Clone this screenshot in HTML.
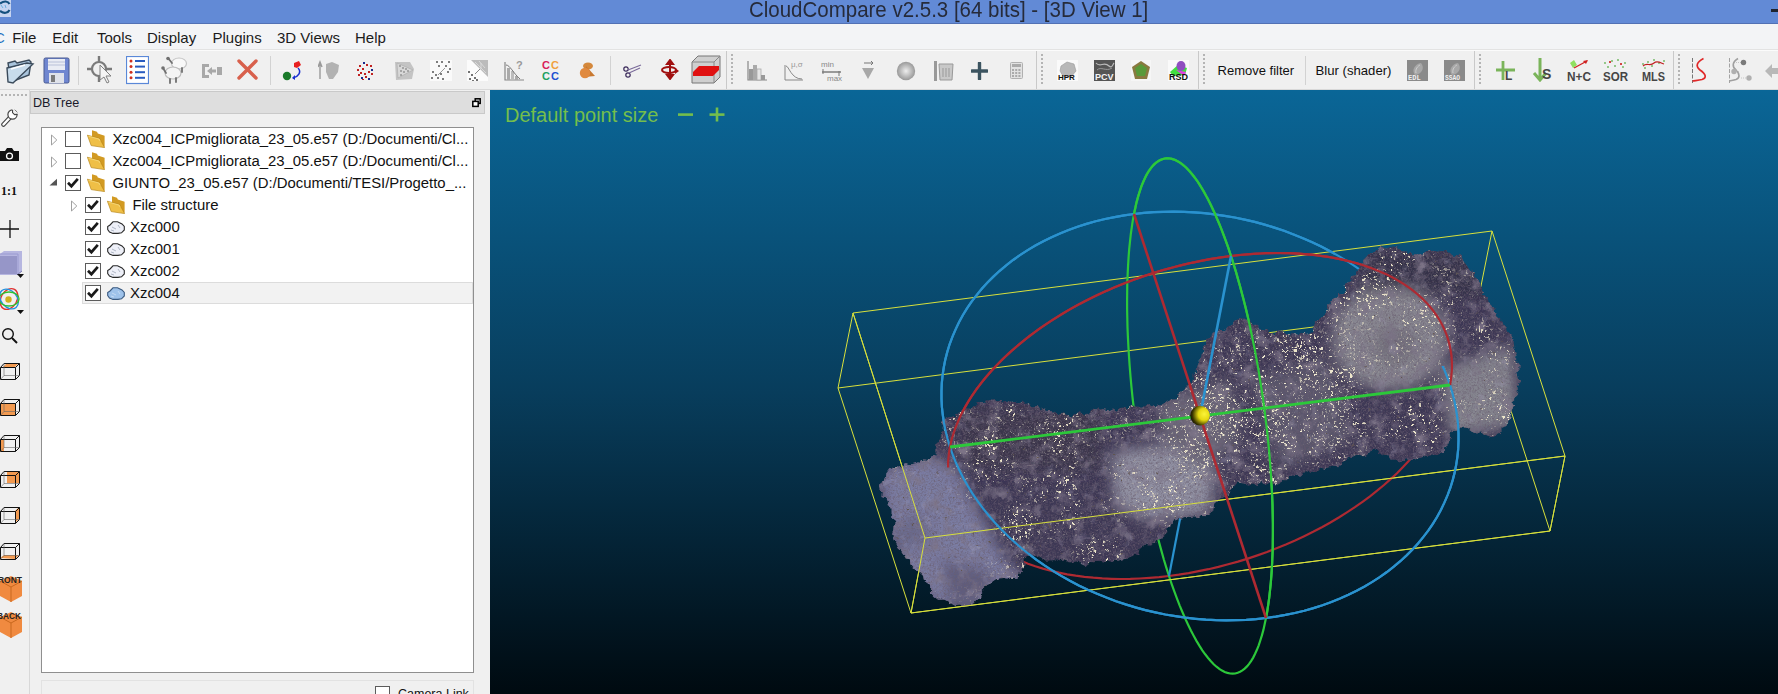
<!DOCTYPE html>
<html><head><meta charset="utf-8">
<style>
*{margin:0;padding:0;box-sizing:border-box}
html,body{width:1778px;height:694px;overflow:hidden;background:#f0f0f0;font-family:"Liberation Sans",sans-serif;color:#000}
.abs{position:absolute}
#title{left:0;top:0;width:1778px;height:24px;background:#628ad6;border-bottom:1.5px solid #5271b4}
#title .t{left:748.5px;top:-3px;font-size:22px;color:#262b3a;white-space:nowrap;transform:scaleX(0.931);transform-origin:0 0}
#menu{left:0;top:24px;width:1778px;height:26px;background:#f3f4f6;border-bottom:1px solid #e3e3e3}
#menu span{position:absolute;top:4.5px;font-size:15px;color:#1b1b1b;white-space:nowrap}
#tb{left:0;top:50px;width:1778px;height:40px;background:#f0f0f0}
#ltb{left:0;top:90px;width:30px;height:604px;background:#f0f0f0;border-right:1px solid #d8d8d8}
#dock{left:30px;top:90px;width:460px;height:604px;background:#f0f0f0}
#dbh{left:30px;top:91px;width:455px;height:23px;background:#dedede;border:1px solid #c9c9c9}
#dbh .t{left:2px;top:4px;font-size:12.6px;color:#1a1a2a}
#tree{left:41px;top:127px;width:433px;height:546px;background:#fff;border:1px solid #8f8f8f}
.row{position:absolute;height:22px;font-size:14.9px;color:#111;white-space:nowrap}
#view{left:490px;top:90px;width:1288px;height:604px;background:linear-gradient(to bottom,#0a6697 0%,#083d5c 50%,#000a10 100%)}
</style></head><body>
<div id="title" class="abs"><div class="t abs">CloudCompare v2.5.3 [64 bits] - [3D View 1]</div>
<svg class="abs" style="left:0;top:0" width="12" height="18"><rect width="11" height="17" fill="#c6d4f0"/><path d="M0,3.5 C4,0.5 8,1 9.5,4" stroke="#14507e" stroke-width="2.2" fill="none"/><path d="M0,11 C4,14 8,13 9.5,10" stroke="#14507e" stroke-width="2.2" fill="none"/><path d="M1,5 L3,8 M5,5 L6,8" stroke="#6ab0e0" stroke-width="1"/></svg>
<div class="abs" style="left:1771px;top:9px;width:8px;height:3px;background:#1e2430"></div></div>

<div id="menu" class="abs">
<span style="left:-6px;color:#1a6fc0">C</span>
<span style="left:12.2px">File</span>
<span style="left:52.3px">Edit</span>
<span style="left:97px">Tools</span>
<span style="left:147px">Display</span>
<span style="left:212.5px">Plugins</span>
<span style="left:277px">3D Views</span>
<span style="left:355px">Help</span>
</div>
<div id="tb" class="abs"></div>
<div id="ltb" class="abs"></div>
<div class="abs" style="left:0;top:50px;width:1778px;height:1px;background:#fbfbfb"></div>
<div class="abs" style="left:0;top:89px;width:1778px;height:1px;background:#d9d9d9"></div>
<div class="abs" style="left:726px;top:51px;width:1px;height:38px;background:#c9c9c9"></div>
<div class="abs" style="left:731px;top:54px;width:2px;height:31px;background:repeating-linear-gradient(to bottom,#b4b4b4 0,#b4b4b4 2px,transparent 2px,transparent 4px)"></div>
<div class="abs" style="left:1036px;top:51px;width:1px;height:38px;background:#c9c9c9"></div>
<div class="abs" style="left:1041px;top:54px;width:2px;height:31px;background:repeating-linear-gradient(to bottom,#b4b4b4 0,#b4b4b4 2px,transparent 2px,transparent 4px)"></div>
<div class="abs" style="left:1198px;top:51px;width:1px;height:38px;background:#c9c9c9"></div>
<div class="abs" style="left:1203px;top:54px;width:2px;height:31px;background:repeating-linear-gradient(to bottom,#b4b4b4 0,#b4b4b4 2px,transparent 2px,transparent 4px)"></div>
<div class="abs" style="left:1474px;top:51px;width:1px;height:38px;background:#c9c9c9"></div>
<div class="abs" style="left:1479px;top:54px;width:2px;height:31px;background:repeating-linear-gradient(to bottom,#b4b4b4 0,#b4b4b4 2px,transparent 2px,transparent 4px)"></div>
<div class="abs" style="left:1673px;top:51px;width:1px;height:38px;background:#c9c9c9"></div>
<div class="abs" style="left:1678px;top:54px;width:2px;height:31px;background:repeating-linear-gradient(to bottom,#b4b4b4 0,#b4b4b4 2px,transparent 2px,transparent 4px)"></div>
<div class="abs" style="left:78px;top:56px;width:1px;height:29px;background:#d2d2d2"></div>
<div class="abs" style="left:270px;top:56px;width:1px;height:29px;background:#d2d2d2"></div>
<div class="abs" style="left:610px;top:56px;width:1px;height:29px;background:#d2d2d2"></div>
<div class="abs" style="left:1305px;top:56px;width:1px;height:29px;background:#d2d2d2"></div>
<svg class="abs" style="left:5px;top:55px" width="30" height="30" viewBox="0 0 30 30" ><path d="M3,8 L10,6 L12,8 L24,5 L26,7 L24,20 L6,27 Z" fill="#a9c4dc" stroke="#3a4a5a" stroke-width="1.4"/><path d="M2,13 L22,8 L28,9 L8,28 L3,27 Z" fill="#c8dcec" stroke="#3a4a5a" stroke-width="1.4"/><path d="M6,14 L20,10" stroke="#fff" stroke-width="1.5"/></svg>
<svg class="abs" style="left:43px;top:57px" width="27" height="27" viewBox="0 0 27 27" ><rect x="1" y="1" width="25" height="25" rx="1.5" fill="#6f86d0" stroke="#4a5a90" stroke-width="1"/><rect x="5" y="2" width="17" height="11" fill="#e9ecf4"/><path d="M5,5 H22 M5,8 H22" stroke="#b8c0d8" stroke-width="1"/><rect x="6" y="16" width="15" height="10" fill="#dfe2ea"/><rect x="8" y="18" width="4" height="7" fill="#7a7a7a"/></svg>
<svg class="abs" style="left:86px;top:55px" width="29" height="29" viewBox="0 0 29 29" ><circle cx="13" cy="14" r="7" fill="none" stroke="#7a7a7a" stroke-width="2.2"/><path d="M13,1 V7 M13,21 V27 M1,14 H6 M20,14 H26" stroke="#7a7a7a" stroke-width="2.4"/><path d="M14,10 L25,21 L20,21 L23,27 L21,28 L18,22 L14,25 Z" fill="#f4f4f4" stroke="#808080" stroke-width="1"/></svg>
<svg class="abs" style="left:126px;top:56px" width="23" height="29" viewBox="0 0 23 29" ><rect x="0.5" y="0.5" width="22" height="27" fill="#fff" stroke="#5a88d8" stroke-width="1.2"/><circle cx="5" cy="5.0" r="1.5" fill="#d03020"/><path d="M9,5.0 H19" stroke="#2a5cc0" stroke-width="2"/><circle cx="5" cy="10.6" r="1.5" fill="#d03020"/><path d="M9,10.6 H19" stroke="#2a5cc0" stroke-width="2"/><circle cx="5" cy="16.2" r="1.5" fill="#d03020"/><path d="M9,16.2 H19" stroke="#2a5cc0" stroke-width="2"/><circle cx="5" cy="21.8" r="1.5" fill="#d03020"/><path d="M9,21.8 H19" stroke="#2a5cc0" stroke-width="2"/></svg>
<svg class="abs" style="left:161px;top:56px" width="27" height="28" viewBox="0 0 27 28" ><ellipse cx="18" cy="7.5" rx="7.5" ry="5.5" fill="#f8f8f8" stroke="#c4c4c4" stroke-width="1.2"/><ellipse cx="12" cy="17" rx="8" ry="6" fill="#f4f4f4" stroke="#bcbcbc" stroke-width="1.2"/><path d="M7,2 L11,7 M2,12 L5,17 M9,23 V27 M15,22 V26 M21,12 V16" stroke="#707070" stroke-width="1.8" stroke-linecap="round"/><circle cx="7" cy="2.5" r="1.8" fill="#707070"/><circle cx="2" cy="12" r="1.8" fill="#707070"/></svg>
<svg class="abs" style="left:201px;top:62px" width="22" height="18" viewBox="0 0 22 18" ><path d="M1,2 H8 V5 H4 V13 H8 V16 H1 Z" fill="#a8a8a8"/><path d="M6,9 L11,5 V7.5 H15 V10.5 H11 V13 Z" fill="#a8a8a8"/><rect x="16" y="5" width="5" height="8" fill="#a8a8a8"/></svg>
<svg class="abs" style="left:236px;top:58px" width="23" height="23" viewBox="0 0 23 23" ><path d="M3,3 L20,20 M20,3 L3,20" stroke="#d8604c" stroke-width="3.4" stroke-linecap="round"/></svg>
<svg class="abs" style="left:282px;top:60px" width="20" height="21" viewBox="0 0 20 21" ><path d="M12,3 L17,1 L19,5 L15,8 L12,7 Z" fill="#e82020"/><circle cx="5" cy="16" r="4.2" fill="#1a7a2a"/><path d="M16,8 C20,12 16,17 11,18" fill="none" stroke="#1a30d0" stroke-width="1.5"/><path d="M10,18 L13,15 L13,20 Z" fill="#1a30d0"/></svg>
<svg class="abs" style="left:318px;top:60px" width="23" height="20" viewBox="0 0 23 20" ><path d="M2,19 V4 M0,7 L2,2 L4,7" stroke="#9a9a9a" stroke-width="1.4" fill="none"/><path d="M8,4 L14,2 L21,5 L20,12 L15,19 L11,19 L8,12 Z" fill="#b2b2b2"/></svg>
<svg class="abs" style="left:356px;top:61px" width="18" height="19" viewBox="0 0 18 19" ><rect x="7" y="1" width="2" height="2" fill="#1a2a8a"/><rect x="3" y="4" width="2" height="2" fill="#c02020"/><rect x="10" y="3" width="2" height="2" fill="#c02020"/><rect x="14" y="4" width="2" height="2" fill="#c02020"/><rect x="1" y="8" width="2" height="2" fill="#c02020"/><rect x="6" y="7" width="2" height="2" fill="#c02020"/><rect x="15" y="8" width="2" height="2" fill="#1a2a8a"/><rect x="4" y="11" width="2" height="2" fill="#c02020"/><rect x="12" y="10" width="2" height="2" fill="#c02020"/><rect x="2" y="13" width="2" height="2" fill="#c02020"/><rect x="8" y="12" width="2" height="2" fill="#c02020"/><rect x="15" y="12" width="2" height="2" fill="#c02020"/><rect x="5" y="16" width="2" height="2" fill="#1a2a8a"/><rect x="9" y="15" width="2" height="2" fill="#c02020"/><rect x="12" y="17" width="2" height="2" fill="#1a2a8a"/><rect x="6" y="18" width="2" height="2" fill="#c02020"/></svg>
<svg class="abs" style="left:394px;top:61px" width="21" height="20" viewBox="0 0 21 20" ><path d="M1,1 L16,1 L20,8 L18,18 L2,19 Z" fill="#c4c4c4"/><path d="M3,2 L19,9 L4,17 Z" fill="#d8d8d8" stroke="#aaa" stroke-width="0.6"/><circle cx="6" cy="5" r="0.8" fill="#666"/><circle cx="9" cy="7" r="0.8" fill="#666"/><circle cx="12" cy="8" r="0.8" fill="#666"/><circle cx="7" cy="10" r="0.8" fill="#666"/><circle cx="10" cy="11" r="0.8" fill="#666"/><circle cx="14" cy="10" r="0.8" fill="#666"/><circle cx="7" cy="14" r="0.8" fill="#666"/></svg>
<svg class="abs" style="left:430px;top:60px" width="22" height="21" viewBox="0 0 22 21" ><rect x="0" y="0" width="22" height="21" fill="#fafafa"/><circle cx="7" cy="2" r="1" fill="#555"/><circle cx="12" cy="2" r="1" fill="#555"/><circle cx="19" cy="2" r="1" fill="#555"/><circle cx="9" cy="6" r="1" fill="#555"/><circle cx="16" cy="6" r="1" fill="#555"/><circle cx="20" cy="9" r="1" fill="#555"/><circle cx="3" cy="12" r="1" fill="#555"/><circle cx="6" cy="15" r="1" fill="#555"/><circle cx="11" cy="14" r="1" fill="#555"/><circle cx="18" cy="12" r="1" fill="#555"/><circle cx="2" cy="18" r="1" fill="#555"/><circle cx="8" cy="18" r="1" fill="#555"/><circle cx="13" cy="19" r="1" fill="#555"/><path d="M8,15 L15,8" stroke="#999" stroke-width="1"/></svg>
<svg class="abs" style="left:467px;top:60px" width="21" height="21" viewBox="0 0 21 21" ><rect x="0" y="0" width="21" height="21" fill="#fbfbfb"/><path d="M4,0 H21 V17 Z" fill="#bbb"/><path d="M8,2 L19,13 M12,1 L18,8 M14,3 V9" stroke="#e0e0e0" stroke-width="0.8"/><circle cx="2" cy="12" r="1" fill="#444"/><circle cx="5" cy="15" r="1" fill="#444"/><circle cx="3" cy="19" r="1" fill="#444"/><circle cx="8" cy="18" r="1" fill="#444"/><circle cx="10" cy="20" r="1" fill="#444"/><circle cx="6" cy="21" r="1" fill="#444"/><path d="M8,14 L13,9" stroke="#888" stroke-width="1"/></svg>
<svg class="abs" style="left:504px;top:59px" width="21" height="22" viewBox="0 0 21 22" ><path d="M1,3 V21 H20" stroke="#888" stroke-width="1.2" fill="none"/><rect x="3" y="9" width="3" height="12" fill="#aaa"/><rect x="7" y="12" width="3" height="9" fill="#bbb"/><rect x="11" y="17" width="3" height="4" fill="#aaa"/><path d="M2,6 C6,6 9,14 16,20" stroke="#777" stroke-width="1" fill="none"/><text x="12" y="10" font-family="Liberation Sans" font-size="11" font-weight="bold" fill="#9a9a9a">?</text></svg>
<svg class="abs" style="left:542px;top:60px" width="19" height="21" viewBox="0 0 19 21" ><g font-family="Liberation Sans" font-weight="bold" font-size="11"><text x="0" y="9" fill="#d8205a">C</text><text x="9" y="9" fill="#f0a040">C</text><text x="0" y="20" fill="#20a060">C</text><text x="9" y="20" fill="#2050d0">C</text></g></svg>
<svg class="abs" style="left:579px;top:61px" width="17" height="18" viewBox="0 0 17 18" ><ellipse cx="9" cy="5" rx="5" ry="3.5" fill="#d4883c"/><path d="M7,5 L16,15 L5,16 Z" fill="#c87830"/><circle cx="6" cy="12" r="5.2" fill="#e08a40"/></svg>
<svg class="abs" style="left:623px;top:63px" width="19" height="15" viewBox="0 0 19 15" ><circle cx="3" cy="6" r="2.2" fill="none" stroke="#3a2a5a" stroke-width="1.2"/><circle cx="5" cy="12" r="2.2" fill="none" stroke="#3a2a5a" stroke-width="1.2"/><path d="M5,7 L18,2 M6,10 L17,5" stroke="#7a6a9a" stroke-width="1.1"/></svg>
<svg class="abs" style="left:660px;top:59px" width="20" height="21" viewBox="0 0 20 21" ><path d="M10,1 V20 M10,1 L7,5 H13 Z M10,20 L7,16 H13 Z" stroke="#a01010" stroke-width="2" fill="#a01010"/><ellipse cx="9" cy="11" rx="7" ry="3" fill="none" stroke="#a01010" stroke-width="2"/><path d="M19,12 L15,9 V15 Z" fill="#a01010"/></svg>
<svg class="abs" style="left:691px;top:55px" width="30" height="29" viewBox="0 0 30 29" ><path d="M1,7 L7,1 L29,1 L29,22 L23,28 L1,28 Z" fill="#cfcfcf" stroke="#777" stroke-width="1"/><path d="M1,7 H23 V28 M23,7 L29,1" stroke="#888" fill="none"/><path d="M2,17 L8,11 L28,11 L28,15 L22,21 L2,21 Z" fill="#e01010"/></svg>
<svg class="abs" style="left:747px;top:61px" width="21" height="20" viewBox="0 0 21 20" ><path d="M1,0 V19 H20" stroke="#888" stroke-width="1.2" fill="none"/><rect x="2" y="8" width="4" height="11" fill="#999"/><rect x="6" y="4" width="4" height="15" fill="#aaa"/><rect x="10" y="8" width="4" height="11" fill="#e6e6e6" stroke="#aaa" stroke-width="0.8"/><rect x="14" y="14" width="4" height="5" fill="#999"/></svg>
<svg class="abs" style="left:784px;top:60px" width="20" height="21" viewBox="0 0 20 21" ><path d="M1,5 V20 H19" stroke="#888" stroke-width="1" fill="none"/><path d="M2,6 C5,6 7,19 18,19" stroke="#888" stroke-width="1" fill="none"/><text x="7" y="7" font-family="Liberation Sans" font-size="8" fill="#999">μ,σ</text></svg>
<svg class="abs" style="left:821px;top:60px" width="22" height="22" viewBox="0 0 22 22" ><text x="0" y="7" font-family="Liberation Sans" font-size="8" fill="#888">min</text><text x="6" y="21" font-family="Liberation Sans" font-size="8" fill="#888">max</text><path d="M1,12 H20" stroke="#999" stroke-width="2"/><path d="M2,9 V14 M18,11 V16" stroke="#777" stroke-width="1"/></svg>
<svg class="abs" style="left:861px;top:61px" width="14" height="20" viewBox="0 0 14 20" ><path d="M3,2 H12 M10,0 L12,2 L10,4" stroke="#777" stroke-width="1" fill="none"/><path d="M1,7 H13 L7,18 Z" fill="#a8a8a8"/></svg>
<svg class="abs" style="left:896px;top:61px" width="20" height="20" viewBox="0 0 20 20" ><defs><radialGradient id="gs" cx="0.5" cy="0.5" r="0.5"><stop offset="0" stop-color="#eee"/><stop offset="1" stop-color="#999"/></radialGradient></defs><circle cx="10" cy="10" r="9.2" fill="url(#gs)"/></svg>
<svg class="abs" style="left:933px;top:61px" width="21" height="20" viewBox="0 0 21 20" ><rect x="1" y="0" width="3" height="20" fill="#999"/><path d="M6,3 H20 L19,19 H7 Z" fill="#c8c8c8" stroke="#999" stroke-width="1"/><path d="M10,7 V16 M13,7 V16 M16,7 V16" stroke="#999" stroke-width="1"/></svg>
<svg class="abs" style="left:971px;top:62px" width="17" height="18" viewBox="0 0 17 18" ><path d="M8.5,1 V17 M1,9 H16" stroke="#3c5460" stroke-width="3.4" stroke-linecap="round"/></svg>
<svg class="abs" style="left:1010px;top:62px" width="13" height="17" viewBox="0 0 13 17" ><rect x="0.5" y="0.5" width="12" height="16" rx="1" fill="#e2e2e2" stroke="#b0b0b0"/><rect x="2" y="2" width="9" height="3" fill="#aaa"/><rect x="2.0" y="7" width="2" height="2" fill="#aaa"/><rect x="5.2" y="7" width="2" height="2" fill="#aaa"/><rect x="8.4" y="7" width="2" height="2" fill="#aaa"/><rect x="2.0" y="10" width="2" height="2" fill="#aaa"/><rect x="5.2" y="10" width="2" height="2" fill="#aaa"/><rect x="8.4" y="10" width="2" height="2" fill="#aaa"/><rect x="2.0" y="13" width="2" height="2" fill="#aaa"/><rect x="5.2" y="13" width="2" height="2" fill="#aaa"/><rect x="8.4" y="13" width="2" height="2" fill="#aaa"/></svg>
<svg class="abs" style="left:1057px;top:60px" width="21" height="21" viewBox="0 0 21 21" ><rect width="21" height="21" fill="#fafafa"/><path d="M4,6 L10,2 L17,4 L19,11 L14,17 L6,16 L3,11 Z" fill="#b8b8b8" stroke="#999" stroke-width="0.6"/><text x="1" y="20" font-family="Liberation Sans" font-weight="bold" font-size="8" fill="#111">HPR</text></svg>
<svg class="abs" style="left:1094px;top:60px" width="21" height="21" viewBox="0 0 21 21" ><rect width="21" height="21" fill="#555"/><path d="M2,3 C6,8 10,1 15,6 C18,9 19,4 20,3" stroke="#bbb" fill="none" stroke-width="1.2"/><path d="M3,10 C7,6 12,12 18,8" stroke="#999" fill="none"/><text x="1" y="20" font-family="Liberation Sans" font-weight="bold" font-size="9" fill="#f4f4f4">PCV</text></svg>
<svg class="abs" style="left:1131px;top:60px" width="20" height="21" viewBox="0 0 20 21" ><rect width="20" height="21" fill="#f6f6f6"/><path d="M10,1 L19,7 L16,19 L4,19 L1,7 Z" fill="#8a7a40"/><path d="M10,4 L16,8 L14,16 L6,16 L4,8 Z" fill="#5a9a3a"/></svg>
<svg class="abs" style="left:1168px;top:60px" width="21" height="21" viewBox="0 0 21 21" ><rect width="21" height="21" fill="#fafafa"/><path d="M2,12 L10,5 L19,8 L17,15 L5,16 Z" fill="#40e040"/><path d="M8,10 L18,12 L16,16 Z" fill="#e040e0"/><ellipse cx="13" cy="6" rx="4.5" ry="5" fill="#9050c0"/><text x="1" y="20" font-family="Liberation Sans" font-weight="bold" font-size="9" fill="#111">RSD</text></svg>
<div class="abs" style="left:1217.6px;top:63.3px;font-size:13px;color:#111;white-space:nowrap">Remove filter</div>
<div class="abs" style="left:1315.5px;top:63.3px;font-size:13.15px;color:#111;white-space:nowrap">Blur (shader)</div>
<svg class="abs" style="left:1407px;top:60px" width="21" height="21" viewBox="0 0 21 21" ><rect width="21" height="21" fill="#8a8a8a"/><path d="M8,15 C4,10 8,4 14,3 C18,8 15,14 8,15 Z" fill="#a8a8a8"/><path d="M9,13 C8,9 11,6 13,5" stroke="#cfcfcf" fill="none"/><text x="1" y="20" font-family="Liberation Mono" font-weight="bold" font-size="7" fill="#f0f0f0">EDL</text></svg>
<svg class="abs" style="left:1444px;top:60px" width="21" height="21" viewBox="0 0 21 21" ><rect width="21" height="21" fill="#8a8a8a"/><path d="M8,15 C4,10 8,4 14,3 C18,8 15,14 8,15 Z" fill="#a8a8a8"/><path d="M9,13 C8,9 11,6 13,5" stroke="#cfcfcf" fill="none"/><text x="1" y="20" font-family="Liberation Mono" font-weight="bold" font-size="6.3" fill="#f0f0f0">SSAO</text></svg>
<svg class="abs" style="left:1495px;top:60px" width="22" height="21" viewBox="0 0 22 21" ><path d="M8,1 V20 M1,10 H20" stroke="#7ab45a" stroke-width="2.8"/><text x="10" y="20" font-family="Liberation Sans" font-weight="bold" font-size="12" fill="#454545">L</text></svg>
<svg class="abs" style="left:1531px;top:58px" width="23" height="24" viewBox="0 0 23 24" ><path d="M9,0 V21 M3,15 L9,22 L15,15" stroke="#7ab45a" stroke-width="3" fill="none"/><text x="11" y="21" font-family="Liberation Sans" font-weight="bold" font-size="14" fill="#454545">S</text></svg>
<svg class="abs" style="left:1567px;top:58px" width="25" height="24" viewBox="0 0 25 24" ><path d="M3,5 L7,2 L10,7 L6,10 Z" fill="#90e060"/><path d="M7,10 L20,3" stroke="#d02020" stroke-width="1.3"/><path d="M21,2 L16,3 L19,6 Z" fill="#d02020"/><text x="0" y="23" font-family="Liberation Sans" font-weight="bold" font-size="12.5" fill="#454545" textLength="24" lengthAdjust="spacingAndGlyphs">N+C</text></svg>
<svg class="abs" style="left:1603px;top:58px" width="26" height="24" viewBox="0 0 26 24" ><circle cx="2" cy="5" r="0.9" fill="#6ab45a"/><circle cx="9" cy="3" r="0.9" fill="#6ab45a"/><circle cx="15" cy="2" r="0.9" fill="#6ab45a"/><circle cx="22" cy="5" r="0.9" fill="#6ab45a"/><circle cx="5" cy="9" r="0.9" fill="#6ab45a"/><circle cx="12" cy="8" r="0.9" fill="#6ab45a"/><circle cx="20" cy="9" r="0.9" fill="#6ab45a"/><path d="M6,3 L8,5 M8,3 L6,5 M17,5 L19,7 M19,5 L17,7" stroke="#d03030" stroke-width="0.9"/><text x="0" y="23" font-family="Liberation Sans" font-weight="bold" font-size="12.5" fill="#454545" textLength="25" lengthAdjust="spacingAndGlyphs">SOR</text></svg>
<svg class="abs" style="left:1642px;top:58px" width="24" height="24" viewBox="0 0 24 24" ><circle cx="1" cy="6" r="0.9" fill="#6ab45a"/><circle cx="6" cy="4" r="0.9" fill="#6ab45a"/><circle cx="12" cy="2" r="0.9" fill="#6ab45a"/><circle cx="17" cy="5" r="0.9" fill="#6ab45a"/><circle cx="22" cy="3" r="0.9" fill="#6ab45a"/><circle cx="3" cy="10" r="0.9" fill="#6ab45a"/><circle cx="10" cy="8" r="0.9" fill="#6ab45a"/><path d="M1,8 C5,4 8,9 12,5 C15,2 19,5 22,6" stroke="#c02020" stroke-width="1.1" fill="none"/><text x="0" y="23" font-family="Liberation Sans" font-weight="bold" font-size="12.5" fill="#454545" textLength="23" lengthAdjust="spacingAndGlyphs">MLS</text></svg>
<svg class="abs" style="left:1691px;top:57px" width="17" height="27" viewBox="0 0 17 27" ><path d="M1.5,1 V26" stroke="#666" stroke-width="0.9" stroke-dasharray="4,1.5"/><path d="M12.5,1.5 C6,5 4,9 9,13 C15,17 16,21 11,22.5 C7,23.5 4,23.5 1.5,24" stroke="#e02828" stroke-width="1.7" fill="none"/></svg>
<svg class="abs" style="left:1728px;top:57px" width="26" height="27" viewBox="0 0 26 27" ><path d="M1.5,1 V26" stroke="#999" stroke-width="0.9" stroke-dasharray="4,1.5"/><path d="M10,1.5 C4,5 4,10 8,13 C12,17 12,21 8,22.5 C5,23.5 3,23.5 1.5,24" stroke="#a0a0a0" stroke-width="1.6" fill="none"/><path d="M8,5.5 H13 M8,14.5 H11 M13,21 H18" stroke="#bbb" stroke-width="0.8" stroke-dasharray="1,1"/><circle cx="15.5" cy="5.5" r="2.7" fill="#7a7a7a"/><circle cx="6" cy="14.5" r="2.7" fill="#b0b0b0"/><circle cx="21" cy="21" r="2.7" fill="#b0b0b0"/></svg>
<svg class="abs" style="left:1764px;top:60px" width="14" height="22" viewBox="0 0 14 22" ><path d="M1,11 L8,4 V8 H14 V14 H8 V18 Z" fill="#b8b8b8"/></svg>
<div class="abs" style="left:1px;top:94px;width:27px;height:2px;background:repeating-linear-gradient(to right,#b4b4b4 0,#b4b4b4 2px,transparent 2px,transparent 4px)"></div>
<svg class="abs" style="left:1px;top:108px" width="17" height="19" viewBox="0 0 17 19" ><path d="M2.5,16.5 L10,8.5" stroke="#444" stroke-width="4.6" stroke-linecap="round"/><path d="M2.5,16.5 L10,8.5" stroke="#fff" stroke-width="2.4" stroke-linecap="round"/><circle cx="11.5" cy="6.5" r="4.6" fill="#fff" stroke="#444" stroke-width="1.2"/><path d="M12,1 L16.5,5.5 L13.5,6.5 L11.5,4.5 Z" fill="#f0f0f0" stroke="#f0f0f0" stroke-width="1"/><path d="M11.6,1.9 L11.5,4.6 L13.6,6.6 L16.2,6.4" stroke="#444" stroke-width="1.1" fill="none"/></svg>
<svg class="abs" style="left:0px;top:148px" width="20" height="14" viewBox="0 0 20 14" ><path d="M0,3 H5 L7,0 H12 L14,3 H19 V13 H0 Z" fill="#111"/><circle cx="9.5" cy="8" r="3.6" fill="#fff"/><circle cx="9.5" cy="8" r="2.3" fill="#111"/></svg>
<div class="abs" style="left:1px;top:184px;font-family:'Liberation Serif',serif;font-weight:bold;font-size:12px;color:#111">1:1</div>
<svg class="abs" style="left:0px;top:219px" width="20" height="20" viewBox="0 0 20 20" ><path d="M10,1 V19 M0,10 H19" stroke="#111" stroke-width="1.3"/></svg>
<svg class="abs" style="left:0px;top:251px" width="25" height="27" viewBox="0 0 25 27" ><path d="M0,3 L4,0 H22 V20 L18,24 H0 Z" fill="#b6b6e0"/><path d="M0,3 H18 V24" stroke="#9a9ad0" fill="none"/><rect x="0" y="5" width="17" height="18" fill="#9696c8"/><path d="M17,24 L22,20" stroke="#7a7ab0"/><path d="M17,23 L24,23 L20.5,27 Z" fill="#111"/></svg>
<svg class="abs" style="left:0px;top:286px" width="25" height="29" viewBox="0 0 25 29" ><ellipse cx="9" cy="13" rx="8" ry="11" fill="none" stroke="#e03030" stroke-width="1.4" transform="rotate(30 9 13)"/><ellipse cx="9" cy="13" rx="8" ry="11" fill="none" stroke="#2090e0" stroke-width="1.4" transform="rotate(-40 9 13)"/><ellipse cx="9" cy="13" rx="10" ry="7" fill="none" stroke="#30c030" stroke-width="1.4"/><circle cx="8.5" cy="13.5" r="3.2" fill="#d0b020"/><path d="M17,24 L24,24 L20.5,28 Z" fill="#111"/></svg>
<svg class="abs" style="left:1px;top:327px" width="18" height="18" viewBox="0 0 18 18" ><circle cx="7" cy="7" r="5.3" fill="none" stroke="#111" stroke-width="1.4"/><path d="M11,11 L16,16" stroke="#111" stroke-width="2"/></svg>
<svg class="abs" style="left:0px;top:363px" width="20" height="18" viewBox="0 0 20 18" ><path d="M3,4 L7,0 H19 L15,4 Z" fill="#f29a50"/><path d="M0.5,4.5 H15.5 V16.5 H0.5 Z M0.5,4.5 L4,0.5 H19.5 V12.5 L15.5,16.5 M15.5,4.5 L19.5,0.5" fill="none" stroke="#111" stroke-width="1"/><path d="M4,0.5 V12.5 H19.5 M4,12.5 L0.5,16.5" fill="none" stroke="#666" stroke-width="0.6"/></svg>
<svg class="abs" style="left:0px;top:399px" width="20" height="18" viewBox="0 0 20 18" ><path d="M0,5 H15 V17 H0 Z" fill="#f29a50"/><path d="M0.5,4.5 H15.5 V16.5 H0.5 Z M0.5,4.5 L4,0.5 H19.5 V12.5 L15.5,16.5 M15.5,4.5 L19.5,0.5" fill="none" stroke="#111" stroke-width="1"/><path d="M4,0.5 V12.5 H19.5 M4,12.5 L0.5,16.5" fill="none" stroke="#666" stroke-width="0.6"/></svg>
<svg class="abs" style="left:0px;top:435px" width="20" height="18" viewBox="0 0 20 18" ><path d="M0,5 H4 V17 H0 Z" fill="#f29a50"/><path d="M0.5,4.5 H15.5 V16.5 H0.5 Z M0.5,4.5 L4,0.5 H19.5 V12.5 L15.5,16.5 M15.5,4.5 L19.5,0.5" fill="none" stroke="#111" stroke-width="1"/><path d="M4,0.5 V12.5 H19.5 M4,12.5 L0.5,16.5" fill="none" stroke="#666" stroke-width="0.6"/></svg>
<svg class="abs" style="left:0px;top:471px" width="20" height="18" viewBox="0 0 20 18" ><path d="M7,0 H19 V12 H7 Z" fill="#f29a50"/><path d="M0.5,4.5 H15.5 V16.5 H0.5 Z M0.5,4.5 L4,0.5 H19.5 V12.5 L15.5,16.5 M15.5,4.5 L19.5,0.5" fill="none" stroke="#111" stroke-width="1"/><path d="M4,0.5 V12.5 H19.5 M4,12.5 L0.5,16.5" fill="none" stroke="#666" stroke-width="0.6"/></svg>
<svg class="abs" style="left:0px;top:507px" width="20" height="18" viewBox="0 0 20 18" ><path d="M15,4 L19,0 V12 L15,16 Z" fill="#f29a50"/><path d="M0.5,4.5 H15.5 V16.5 H0.5 Z M0.5,4.5 L4,0.5 H19.5 V12.5 L15.5,16.5 M15.5,4.5 L19.5,0.5" fill="none" stroke="#111" stroke-width="1"/><path d="M4,0.5 V12.5 H19.5 M4,12.5 L0.5,16.5" fill="none" stroke="#666" stroke-width="0.6"/></svg>
<svg class="abs" style="left:0px;top:543px" width="20" height="18" viewBox="0 0 20 18" ><path d="M0,15 L4,12 H19 L15,16 Z" fill="#f29a50"/><path d="M0.5,4.5 H15.5 V16.5 H0.5 Z M0.5,4.5 L4,0.5 H19.5 V12.5 L15.5,16.5 M15.5,4.5 L19.5,0.5" fill="none" stroke="#111" stroke-width="1"/><path d="M4,0.5 V12.5 H19.5 M4,12.5 L0.5,16.5" fill="none" stroke="#666" stroke-width="0.6"/></svg>
<svg class="abs" style="left:0px;top:573px" width="26" height="30" viewBox="0 0 26 30" ><path d="M11,3 L22,8 V23 L11,29 L0,23 V8 Z" fill="#f08a40"/><path d="M11,14 V29 M0,8 L11,14 L22,8" stroke="#c8681e" stroke-width="1" fill="none"/><text x="-2" y="10" font-family="Liberation Sans" font-weight="bold" font-size="9.5" fill="#222" textLength="24" lengthAdjust="spacingAndGlyphs">RONT</text></svg>
<svg class="abs" style="left:0px;top:609px" width="26" height="30" viewBox="0 0 26 30" ><path d="M11,3 L22,8 V23 L11,29 L0,23 V8 Z" fill="#f08a40"/><path d="M11,14 V29 M0,8 L11,14 L22,8" stroke="#c8681e" stroke-width="1" fill="none"/><text x="-3" y="10" font-family="Liberation Sans" font-weight="bold" font-size="9.5" fill="#222" textLength="24" lengthAdjust="spacingAndGlyphs">BACK</text></svg>

<div id="dock" class="abs"></div>
<div id="dbh" class="abs"><div class="t abs">DB Tree</div><svg class="abs" style="left:441px;top:6px" width="10" height="10"><rect x="3.2" y="0.8" width="5" height="4.6" fill="none" stroke="#000" stroke-width="1.5"/><rect x="0.8" y="3.4" width="5.4" height="5" fill="#fff" stroke="#000" stroke-width="1.5"/></svg></div>
<div id="tree" class="abs"></div>
<svg width="0" height="0" style="position:absolute"><defs>
<symbol id="fold" viewBox="0 0 18 18"><path d="M5,0.3 L10,1.8 L10.8,3.4 L17.6,5.8 L17.6,16.8 L5,14.5 Z" fill="#d29a22"/><path d="M0.4,5.2 L12.6,8.4 L17.6,17.6 L4.2,15.6 Z" fill="#efbf46" stroke="#b8861a" stroke-width="0.7"/><path d="M1.5,6.2 L12,9 L13,11" stroke="#f8dc80" stroke-width="0.8" fill="none"/></symbol>
<symbol id="cld" viewBox="0 0 18 13"><path d="M6,0.8 L10.5,0.8 L15,3 L17.3,5.5 L17.3,9 L14.5,11.8 L11,12.4 L6,12.4 L2.5,11 L0.7,8.5 L0.7,5.5 L3,4 Z" fill="#eef0f8" stroke="#2a2a2a" stroke-width="1.1"/><path d="M5,6 L9,8 M11,4 L13,7 M4,9 L7,10" stroke="#a8b0c0" stroke-width="0.9"/></symbol>
<symbol id="cldb" viewBox="0 0 18 13"><path d="M6,0.8 L10.5,0.8 L15,3 L17.3,5.5 L17.3,9 L14.5,11.8 L11,12.4 L6,12.4 L2.5,11 L0.7,8.5 L0.7,5.5 L3,4 Z" fill="#9ec2ea" stroke="#3a5a80" stroke-width="1.1"/><path d="M5,6 L9,8 M11,4 L13,7 M4,9 L7,10" stroke="#c8dcf4" stroke-width="0.9"/></symbol>
</defs></svg>
<div class="abs" style="left:82px;top:282px;width:391px;height:22px;background:#f2f2f2;border:1px solid #dcdcdc"></div>
<svg class="abs" style="left:50px;top:134px" width="8" height="12"><path d="M1.5,1 L6.8,6 L1.5,11 Z" fill="none" stroke="#a0a0a0" stroke-width="1"/></svg>
<div class="abs" style="left:65px;top:131px;width:16px;height:16px;border:1px solid #5c5c5c;background:#fff"></div>
<svg class="abs" style="left:87px;top:130px" width="18" height="18"><use href="#fold"/></svg>
<div class="row" style="left:112.4px;top:129px;line-height:20px">Xzc004_ICPmigliorata_23_05.e57 (D:/Documenti/Cl...</div>
<svg class="abs" style="left:50px;top:156px" width="8" height="12"><path d="M1.5,1 L6.8,6 L1.5,11 Z" fill="none" stroke="#a0a0a0" stroke-width="1"/></svg>
<div class="abs" style="left:65px;top:153px;width:16px;height:16px;border:1px solid #5c5c5c;background:#fff"></div>
<svg class="abs" style="left:87px;top:152px" width="18" height="18"><use href="#fold"/></svg>
<div class="row" style="left:112.4px;top:151px;line-height:20px">Xzc004_ICPmigliorata_23_05.e57 (D:/Documenti/Cl...</div>
<svg class="abs" style="left:49px;top:175px" width="9" height="12"><path d="M0.5,10.6 L8,3.8 L8,10.6 Z" fill="#555"/></svg>
<div class="abs" style="left:65px;top:175px;width:16px;height:16px;border:1px solid #5c5c5c;background:#fff"></div>
<svg class="abs" style="left:65px;top:175px" width="16" height="16"><path d="M3,7.8 L6.4,11.2 L12.8,3.8" fill="none" stroke="#1a1a1a" stroke-width="2.7"/></svg>
<svg class="abs" style="left:87px;top:174px" width="18" height="18"><use href="#fold"/></svg>
<div class="row" style="left:112.4px;top:173px;line-height:20px">GIUNTO_23_05.e57 (D:/Documenti/TESI/Progetto_...</div>
<svg class="abs" style="left:70px;top:200px" width="8" height="12"><path d="M1.5,1 L6.8,6 L1.5,11 Z" fill="none" stroke="#a0a0a0" stroke-width="1"/></svg>
<div class="abs" style="left:85px;top:197px;width:16px;height:16px;border:1px solid #5c5c5c;background:#fff"></div>
<svg class="abs" style="left:85px;top:197px" width="16" height="16"><path d="M3,7.8 L6.4,11.2 L12.8,3.8" fill="none" stroke="#1a1a1a" stroke-width="2.7"/></svg>
<svg class="abs" style="left:106.5px;top:196px" width="18" height="18"><use href="#fold"/></svg>
<div class="row" style="left:132.4px;top:195px;line-height:20px">File structure</div>
<div class="abs" style="left:85px;top:219px;width:16px;height:16px;border:1px solid #5c5c5c;background:#fff"></div>
<svg class="abs" style="left:85px;top:219px" width="16" height="16"><path d="M3,7.8 L6.4,11.2 L12.8,3.8" fill="none" stroke="#1a1a1a" stroke-width="2.7"/></svg>
<svg class="abs" style="left:106.5px;top:221px" width="18" height="13"><use href="#cld"/></svg>
<div class="row" style="left:130px;top:217px;line-height:20px">Xzc000</div>
<div class="abs" style="left:85px;top:241px;width:16px;height:16px;border:1px solid #5c5c5c;background:#fff"></div>
<svg class="abs" style="left:85px;top:241px" width="16" height="16"><path d="M3,7.8 L6.4,11.2 L12.8,3.8" fill="none" stroke="#1a1a1a" stroke-width="2.7"/></svg>
<svg class="abs" style="left:106.5px;top:243px" width="18" height="13"><use href="#cld"/></svg>
<div class="row" style="left:130px;top:239px;line-height:20px">Xzc001</div>
<div class="abs" style="left:85px;top:263px;width:16px;height:16px;border:1px solid #5c5c5c;background:#fff"></div>
<svg class="abs" style="left:85px;top:263px" width="16" height="16"><path d="M3,7.8 L6.4,11.2 L12.8,3.8" fill="none" stroke="#1a1a1a" stroke-width="2.7"/></svg>
<svg class="abs" style="left:106.5px;top:265px" width="18" height="13"><use href="#cld"/></svg>
<div class="row" style="left:130px;top:261px;line-height:20px">Xzc002</div>
<div class="abs" style="left:85px;top:285px;width:16px;height:16px;border:1px solid #5c5c5c;background:#fff"></div>
<svg class="abs" style="left:85px;top:285px" width="16" height="16"><path d="M3,7.8 L6.4,11.2 L12.8,3.8" fill="none" stroke="#1a1a1a" stroke-width="2.7"/></svg>
<svg class="abs" style="left:106.5px;top:287px" width="18" height="13"><use href="#cldb"/></svg>
<div class="row" style="left:130px;top:283px;line-height:20px">Xzc004</div>
<div class="abs" style="left:41px;top:680px;width:433px;height:20px;border:1px solid #e2e2e2;background:#f0f0f0"></div>
<div class="abs" style="left:375px;top:686px;width:15px;height:15px;border:1px solid #5c5c5c;background:#fff"></div>
<div class="abs" style="left:398px;top:686.5px;font-size:12.5px;color:#111;white-space:nowrap">Camera Link</div>
<div id="view" class="abs"></div>
<svg class="abs" style="left:490px;top:90px" width="1288" height="604" viewBox="490 90 1288 604">
<defs>
<linearGradient id="bg" x1="0" y1="0" x2="0" y2="1"><stop offset="0" stop-color="#0a6697"/><stop offset="0.5" stop-color="#083d5c"/><stop offset="1" stop-color="#000a10"/></linearGradient>
<clipPath id="rc"><path d="M977.0,402.9 L980.7,403.3 L984.3,402.9 L987.6,400.2 L991.2,399.3 L995.0,400.4 L999.0,400.0 L1003.0,402.4 L1007.0,401.8 L1010.9,401.4 L1014.4,402.0 L1017.9,403.2 L1021.8,401.7 L1025.1,403.7 L1029.4,403.6 L1032.6,407.7 L1037.5,405.1 L1040.5,409.3 L1045.0,407.4 L1047.5,411.2 L1051.4,410.9 L1054.7,412.4 L1057.8,415.5 L1062.3,412.6 L1066.3,413.4 L1070.5,417.7 L1075.0,414.5 L1079.7,411.2 L1084.3,414.5 L1088.3,413.7 L1091.7,409.5 L1095.9,410.3 L1100.0,408.4 L1104.0,409.2 L1108.0,410.5 L1112.0,408.5 L1116.0,410.9 L1119.5,408.1 L1123.1,407.6 L1127.4,409.3 L1130.4,406.6 L1134.0,405.6 L1138.0,406.8 L1142.0,406.6 L1145.9,406.5 L1149.2,404.0 L1153.8,406.0 L1157.8,406.0 L1161.6,405.0 L1164.7,402.7 L1167.8,400.4 L1171.3,399.4 L1175.6,399.6 L1178.0,397.0 L1178.8,392.8 L1181.7,390.7 L1184.5,388.6 L1187.7,385.7 L1191.4,383.2 L1193.0,379.0 L1192.4,374.8 L1197.0,372.5 L1196.7,368.4 L1198.4,365.0 L1198.5,361.1 L1200.7,357.9 L1201.7,354.2 L1204.5,351.2 L1202.9,346.6 L1206.0,343.7 L1206.1,338.9 L1210.9,338.0 L1212.4,333.1 L1216.7,331.1 L1220.8,330.0 L1225.2,329.9 L1227.7,326.5 L1232.2,324.9 L1234.8,321.0 L1238.9,318.0 L1243.0,318.4 L1245.7,319.6 L1250.4,320.6 L1252.4,324.9 L1257.7,324.7 L1259.4,329.4 L1263.8,329.0 L1267.4,330.0 L1270.1,334.1 L1274.2,334.5 L1277.8,330.2 L1282.3,331.0 L1286.7,334.6 L1292.1,334.3 L1295.7,334.4 L1298.2,334.0 L1301.6,332.8 L1305.9,333.8 L1310.5,333.5 L1313.1,331.1 L1314.0,327.0 L1315.0,322.1 L1318.7,319.2 L1323.1,316.7 L1325.4,313.4 L1326.9,309.5 L1327.6,305.2 L1330.9,302.5 L1332.9,298.9 L1336.3,297.5 L1338.4,294.1 L1343.7,294.0 L1345.5,290.7 L1344.7,285.7 L1347.2,282.8 L1351.3,281.0 L1351.4,276.4 L1355.9,275.1 L1356.6,271.0 L1359.4,268.5 L1361.6,265.5 L1362.1,261.2 L1365.3,258.0 L1368.2,254.6 L1372.4,252.7 L1376.9,250.2 L1381.1,245.4 L1385.2,248.9 L1389.5,247.2 L1393.8,246.6 L1398.1,247.7 L1401.6,251.6 L1406.6,251.6 L1411.0,253.5 L1414.9,254.6 L1418.6,254.5 L1422.3,253.4 L1425.8,251.7 L1429.7,250.3 L1432.5,249.7 L1437.0,250.5 L1441.6,251.0 L1446.2,251.4 L1449.6,252.7 L1452.5,255.4 L1456.1,255.9 L1460.3,254.8 L1462.3,258.5 L1463.8,262.1 L1466.3,264.8 L1468.2,268.0 L1470.3,271.1 L1473.9,273.1 L1474.3,276.8 L1477.5,279.3 L1480.1,282.0 L1480.6,285.7 L1483.0,289.3 L1482.9,294.5 L1486.0,297.7 L1488.8,301.1 L1490.5,305.0 L1494.5,307.7 L1494.9,312.3 L1496.3,316.5 L1499.6,318.9 L1502.3,321.8 L1503.9,325.4 L1506.4,328.4 L1507.3,332.3 L1511.2,335.1 L1513.1,338.7 L1514.0,342.9 L1514.2,347.2 L1514.9,351.5 L1516.3,355.7 L1516.1,360.2 L1519.6,364.2 L1519.4,368.7 L1516.1,372.0 L1517.7,376.9 L1520.4,382.3 L1517.3,385.8 L1517.7,390.2 L1517.1,394.4 L1515.4,398.2 L1511.5,401.4 L1514.1,406.6 L1511.6,409.9 L1510.9,413.7 L1510.3,417.6 L1508.3,421.1 L1506.7,425.6 L1501.7,428.1 L1501.0,433.0 L1497.3,433.5 L1494.9,437.0 L1491.0,437.1 L1486.1,435.1 L1481.4,432.6 L1475.7,433.6 L1470.9,431.2 L1467.0,428.0 L1461.6,426.6 L1457.3,430.6 L1451.8,431.0 L1449.9,434.7 L1450.4,439.1 L1448.3,442.7 L1446.7,446.0 L1443.8,448.7 L1444.0,452.8 L1440.4,452.7 L1437.1,454.7 L1433.4,453.5 L1430.2,455.8 L1426.0,455.8 L1422.1,457.2 L1418.2,458.2 L1414.3,459.8 L1410.2,460.2 L1406.2,459.3 L1402.6,461.1 L1399.0,462.5 L1395.6,459.8 L1390.6,459.8 L1387.9,455.3 L1383.3,454.6 L1379.2,452.9 L1375.4,448.5 L1371.3,450.1 L1368.3,454.1 L1364.3,456.6 L1360.1,455.1 L1356.2,455.0 L1352.7,456.8 L1348.3,457.0 L1345.9,460.6 L1342.0,462.2 L1339.2,466.0 L1335.3,466.2 L1331.6,467.0 L1327.8,467.7 L1324.1,468.4 L1320.1,467.7 L1317.4,471.4 L1313.9,472.2 L1310.3,473.0 L1306.0,471.0 L1303.2,473.9 L1300.4,476.9 L1296.0,474.6 L1292.4,475.5 L1289.1,477.0 L1286.6,480.2 L1282.6,480.0 L1280.0,483.1 L1276.9,485.1 L1273.2,483.4 L1269.2,483.0 L1264.8,485.3 L1261.2,481.8 L1256.9,485.1 L1252.9,483.6 L1248.9,484.6 L1244.9,483.7 L1241.7,483.3 L1237.2,482.8 L1234.7,486.1 L1232.2,487.6 L1230.6,491.2 L1228.4,494.7 L1225.7,496.4 L1220.9,498.5 L1217.7,500.5 L1214.2,503.5 L1213.8,507.3 L1213.1,511.2 L1208.9,513.9 L1205.0,516.3 L1201.5,515.7 L1198.0,517.0 L1194.5,516.4 L1191.0,517.1 L1187.5,516.4 L1184.2,517.5 L1180.8,518.7 L1177.3,519.6 L1173.2,520.5 L1172.3,525.5 L1167.3,528.2 L1167.4,532.3 L1164.3,535.0 L1163.7,538.2 L1159.5,538.8 L1156.3,541.6 L1153.0,544.3 L1149.5,544.4 L1145.7,543.7 L1142.5,545.9 L1139.6,548.3 L1138.6,553.5 L1134.4,555.5 L1130.0,556.9 L1125.4,558.8 L1122.0,559.8 L1118.7,560.8 L1115.0,560.6 L1111.7,562.1 L1107.7,560.5 L1104.3,561.6 L1100.9,561.0 L1097.1,561.2 L1093.4,562.4 L1089.6,561.8 L1085.6,566.0 L1081.8,564.4 L1078.3,560.7 L1074.0,561.9 L1069.9,562.3 L1065.1,559.4 L1060.0,560.3 L1056.5,559.6 L1052.9,560.3 L1049.4,560.4 L1045.9,560.8 L1042.5,558.3 L1039.1,556.5 L1035.7,556.1 L1031.9,556.8 L1027.3,556.6 L1023.6,558.9 L1024.9,563.8 L1023.7,567.7 L1022.0,571.4 L1019.1,573.8 L1017.3,579.1 L1012.8,578.8 L1008.3,578.4 L1003.8,578.0 L999.8,578.3 L995.8,579.2 L992.5,581.5 L989.7,584.3 L985.5,585.9 L982.1,588.9 L982.1,593.5 L980.9,597.9 L976.1,600.1 L973.0,603.8 L969.5,604.9 L966.1,605.7 L962.5,605.3 L959.1,604.5 L954.3,605.6 L950.4,602.8 L946.8,600.2 L942.8,599.4 L938.2,599.7 L934.7,597.2 L931.0,593.3 L930.9,587.5 L928.2,583.7 L924.1,580.7 L923.1,575.8 L920.6,573.3 L917.9,571.1 L914.6,569.3 L912.1,566.7 L910.1,563.8 L910.1,559.2 L905.6,558.3 L904.0,555.0 L901.5,551.1 L898.1,547.7 L896.6,543.2 L893.8,539.6 L892.2,534.9 L893.1,530.6 L893.7,526.2 L896.8,521.4 L892.8,518.3 L891.6,514.2 L891.6,509.8 L889.1,506.2 L888.1,502.0 L886.5,498.6 L882.4,497.0 L882.7,492.8 L879.3,489.4 L879.0,484.5 L883.2,481.6 L885.9,478.0 L886.4,473.6 L889.2,469.3 L893.9,467.7 L897.3,466.3 L901.3,468.0 L904.3,464.6 L907.6,463.7 L912.2,464.2 L916.2,462.9 L920.1,461.4 L923.7,459.4 L928.3,459.9 L931.2,456.3 L936.9,455.3 L935.2,451.2 L936.2,447.6 L936.4,443.8 L939.4,440.3 L940.9,436.6 L941.0,432.4 L944.1,430.0 L943.4,425.7 L941.0,422.0 L945.2,418.7 L950.1,417.0 L955.4,415.9 L958.8,412.7 L962.7,410.9 L965.8,408.3 L971.3,409.1 L974.4,406.4Z"/></clipPath>
<filter id="spk" x="0" y="0" width="100%" height="100%">
<feTurbulence type="turbulence" baseFrequency="0.32" numOctaves="2" seed="11" result="n"/>
<feColorMatrix in="n" type="matrix" values="0 0 0 0 0.86  0 0 0 0 0.8  0 0 0 0 0.6  8 0 0 0 -3.5" result="s"/>
<feTurbulence type="fractalNoise" baseFrequency="0.025" numOctaves="2" seed="4" result="m"/>
<feColorMatrix in="m" type="matrix" values="0 0 0 0 0  0 0 0 0 0  0 0 0 0 0  5 0 0 0 -2.0" result="mm"/>
<feComposite in="s" in2="mm" operator="in"/>
</filter>
<filter id="dspk" x="0" y="0" width="100%" height="100%">
<feTurbulence type="turbulence" baseFrequency="0.25" numOctaves="1" seed="5" result="n"/>
<feColorMatrix in="n" type="matrix" values="0 0 0 0 0.12  0 0 0 0 0.09  0 0 0 0 0.08  5 0 0 0 -2.4"/>
</filter>
<filter id="blot" x="0" y="0" width="100%" height="100%">
<feTurbulence type="fractalNoise" baseFrequency="0.09" numOctaves="3" seed="7" result="n"/>
<feColorMatrix in="n" type="matrix" values="0 0 0 0 0.4  0 0 0 0 0.38  0 0 0 0 0.52  1.4 0 0 0 -0.85"/>
</filter>
<filter id="mott" x="0" y="0" width="100%" height="100%">
<feTurbulence type="fractalNoise" baseFrequency="0.07" numOctaves="3" seed="31" result="n"/>
<feColorMatrix in="n" type="matrix" values="0 0 0 0 0.2  0 0 0 0 0.17  0 0 0 0 0.24  2.6 0 0 0 -1.3"/>
</filter>
<filter id="soft" x="-20%" y="-20%" width="140%" height="140%"><feGaussianBlur stdDeviation="7"/></filter>
<filter id="spk2" x="0" y="0" width="100%" height="100%">
<feTurbulence type="turbulence" baseFrequency="0.34" numOctaves="2" seed="21" result="n"/>
<feColorMatrix in="n" type="matrix" values="0 0 0 0 0.9  0 0 0 0 0.85  0 0 0 0 0.66  7 0 0 0 -3.1"/>
</filter>
<mask id="spkmask1" maskUnits="userSpaceOnUse" x="870" y="240" width="660" height="380"><rect x="870" y="240" width="660" height="380" fill="#fff"/><path d="M870,460 L940,455 L975,510 L1000,560 L1030,600 L870,620 Z" fill="#000" filter="url(#mblur)"/></mask>
<filter id="mblur" x="-50%" y="-50%" width="200%" height="200%"><feGaussianBlur stdDeviation="16"/></filter>
<mask id="spkmask" maskUnits="userSpaceOnUse" x="870" y="240" width="660" height="380"><path d="M1150,400 L1200,355 L1250,330 L1330,315 L1360,340 L1350,460 L1250,480 L1180,465 L1150,440 Z" fill="#fff" filter="url(#mblur)"/><path d="M970,420 L1090,415 L1090,450 L970,460 Z" fill="#888" filter="url(#mblur)"/></mask>
<filter id="fine" x="0" y="0" width="100%" height="100%">
<feTurbulence type="fractalNoise" baseFrequency="0.6" numOctaves="1" seed="9" result="n"/>
<feColorMatrix in="n" type="matrix" values="0 0 0 0 0.14  0 0 0 0 0.11  0 0 0 0 0.16  -2.0 0 0 0 1.15"/>
</filter>
<filter id="rough" x="-5%" y="-5%" width="110%" height="110%">
<feTurbulence type="fractalNoise" baseFrequency="0.25" numOctaves="2" seed="2" result="t"/>
<feDisplacementMap in="SourceGraphic" in2="t" scale="4" xChannelSelector="R" yChannelSelector="G"/>
</filter>
<radialGradient id="lite1" cx="0.5" cy="0.5" r="0.5"><stop offset="0" stop-color="#9a9cb6" stop-opacity="0.9"/><stop offset="1" stop-color="#9a9cb6" stop-opacity="0"/></radialGradient>
</defs>
<rect x="490" y="90" width="1288" height="604" fill="url(#bg)"/>
<g fill="none">
<path d="M853,313 L838,388 M838,388 L911,613 M911,613 L925,538 M925,538 L853,313 M1492,231 L1477,306 M1477,306 L1550,531 M1550,531 L1565,456 M1565,456 L1492,231 M853,313 L1492,231 M838,388 L1477,306 M911,613 L1550,531 M925,538 L1565,456" stroke="#d8e03c" stroke-width="1"/>
<path d="M1450.0,385.0 L1447.2,377.1 L1444.1,369.2 L1440.5,361.5 L1436.6,353.8 L1432.3,346.2 L1427.7,338.7 L1422.7,331.3 L1417.4,324.1 L1411.7,317.0 L1405.7,310.1 L1399.4,303.3 L1392.8,296.7 L1385.9,290.3 L1378.7,284.0 L1371.2,278.0 L1363.5,272.2 L1355.5,266.6 L1347.2,261.2 L1338.8,256.1 L1330.1,251.2 L1321.2,246.6 L1312.2,242.3 L1302.9,238.2 L1293.6,234.4 L1284.0,230.8 L1274.4,227.6 L1264.6,224.6 L1254.7,221.9 L1244.7,219.6 L1234.7,217.5 L1224.6,215.8 L1214.5,214.3 L1204.3,213.2 L1194.2,212.3 L1184.0,211.8 L1173.9,211.6 L1163.8,211.8 L1153.8,212.2 L1143.9,212.9 L1134.0,214.0 L1124.2,215.4 L1114.6,217.1 L1105.1,219.0 L1095.7,221.3 L1086.5,223.9 L1077.5,226.8 L1068.6,230.0 L1060.0,233.5 L1051.6,237.2 L1043.4,241.2 L1035.4,245.5 L1027.7,250.1 L1020.3,254.9 L1013.1,260.0 L1006.2,265.3 L999.7,270.8 L993.4,276.6 L987.5,282.5 L981.8,288.7 L976.6,295.1 L971.6,301.6 L967.0,308.4 L962.8,315.3 L959.0,322.3 L955.5,329.6 L952.4,336.9 L949.6,344.3 L947.3,351.9 L945.3,359.6 L943.8,367.3 L942.6,375.2 L941.8,383.1 L941.5,391.0 L941.5,399.0 L941.9,407.0 L942.8,415.0 L944.0,423.0 L945.6,431.1 L947.6,439.0 L950.0,447.0 L952.8,454.9 L955.9,462.8 L959.5,470.5 L963.4,478.2 L967.7,485.8 L972.3,493.3 L977.3,500.7 L982.6,507.9 L988.3,515.0 L994.3,521.9 L1000.6,528.7 L1007.2,535.3 L1014.1,541.7 L1021.3,548.0 L1028.8,554.0 L1036.5,559.8 L1044.5,565.4 L1052.8,570.8 L1061.2,575.9 L1069.9,580.8 L1078.8,585.4 L1087.8,589.7 L1097.1,593.8 L1106.4,597.6 L1116.0,601.2 L1125.6,604.4 L1135.4,607.4 L1145.3,610.1 L1155.3,612.4 L1165.3,614.5 L1175.4,616.2 L1185.5,617.7 L1195.7,618.8 L1205.8,619.7 L1216.0,620.2 L1226.1,620.4 L1236.2,620.2 L1246.2,619.8 L1256.1,619.1 L1266.0,618.0 L1275.8,616.6 L1285.4,614.9 L1294.9,613.0 L1304.3,610.7 L1313.5,608.1 L1322.5,605.2 L1331.4,602.0 L1340.0,598.5 L1348.4,594.8 L1356.6,590.8 L1364.6,586.5 L1372.3,581.9 L1379.7,577.1 L1386.9,572.0 L1393.8,566.7 L1400.3,561.2 L1406.6,555.4 L1412.5,549.5 L1418.2,543.3 L1423.4,536.9 L1428.4,530.4 L1433.0,523.6 L1437.2,516.7 L1441.0,509.7 L1444.5,502.4 L1447.6,495.1 L1450.4,487.7 L1452.7,480.1 L1454.7,472.4 L1456.2,464.7 L1457.4,456.8 L1458.2,448.9 L1458.5,441.0 L1458.5,433.0 L1458.1,425.0 L1457.2,417.0 L1456.0,409.0 L1454.4,400.9 L1452.4,393.0 L1450.0,385.0Z" stroke="#2a92cf" stroke-width="2.2"/>
<path d="M1450.0,385.0 L1451.0,378.7 L1451.7,372.5 L1451.9,366.4 L1451.8,360.4 L1451.2,354.4 L1450.3,348.5 L1449.0,342.7 L1447.3,337.1 L1445.3,331.5 L1442.8,326.1 L1440.0,320.9 L1436.8,315.7 L1433.3,310.8 L1429.4,306.0 L1425.1,301.3 L1420.5,296.9 L1415.5,292.6 L1410.2,288.5 L1404.6,284.6 L1398.7,280.9 L1392.5,277.5 L1385.9,274.2 L1379.1,271.2 L1372.0,268.3 L1364.7,265.7 L1357.1,263.4 L1349.2,261.3 L1341.1,259.4 L1332.8,257.7 L1324.3,256.3 L1315.6,255.2 L1306.7,254.3 L1297.7,253.6 L1288.5,253.2 L1279.2,253.0 L1269.7,253.1 L1260.2,253.5 L1250.5,254.1 L1240.8,254.9 L1231.0,256.0 L1221.2,257.3 L1211.3,258.9 L1201.4,260.8 L1191.5,262.8 L1181.6,265.1 L1171.8,267.7 L1162.0,270.4 L1152.2,273.4 L1142.6,276.6 L1133.0,280.0 L1123.5,283.7 L1114.1,287.5 L1104.9,291.5 L1095.8,295.8 L1086.9,300.2 L1078.1,304.8 L1069.6,309.5 L1061.2,314.5 L1053.1,319.6 L1045.1,324.8 L1037.5,330.2 L1030.0,335.7 L1022.9,341.3 L1016.0,347.0 L1009.4,352.9 L1003.0,358.8 L997.0,364.9 L991.3,371.0 L985.9,377.2 L980.9,383.4 L976.2,389.7 L971.8,396.0 L967.8,402.4 L964.1,408.8 L960.9,415.2 L957.9,421.6 L955.4,428.0 L953.2,434.4 L951.4,440.7 L950.0,447.0 L949.0,453.3 L948.3,459.5 L948.1,465.6 L948.2,471.6 L948.8,477.6 L949.7,483.5 L951.0,489.3 L952.7,494.9 L954.7,500.5 L957.2,505.9 L960.0,511.1 L963.2,516.3 L966.7,521.2 L970.6,526.0 L974.9,530.7 L979.5,535.1 L984.5,539.4 L989.8,543.5 L995.4,547.4 L1001.3,551.1 L1007.5,554.5 L1014.1,557.8 L1020.9,560.8 L1028.0,563.7 L1035.3,566.3 L1042.9,568.6 L1050.8,570.7 L1058.9,572.6 L1067.2,574.3 L1075.7,575.7 L1084.4,576.8 L1093.3,577.7 L1102.3,578.4 L1111.5,578.8 L1120.8,579.0 L1130.3,578.9 L1139.8,578.5 L1149.5,577.9 L1159.2,577.1 L1169.0,576.0 L1178.8,574.7 L1188.7,573.1 L1198.6,571.2 L1208.5,569.2 L1218.4,566.9 L1228.2,564.3 L1238.0,561.6 L1247.8,558.6 L1257.4,555.4 L1267.0,552.0 L1276.5,548.3 L1285.9,544.5 L1295.1,540.5 L1304.2,536.2 L1313.1,531.8 L1321.9,527.2 L1330.4,522.5 L1338.8,517.5 L1346.9,512.4 L1354.9,507.2 L1362.5,501.8 L1370.0,496.3 L1377.1,490.7 L1384.0,485.0 L1390.6,479.1 L1397.0,473.2 L1403.0,467.1 L1408.7,461.0 L1414.1,454.8 L1419.1,448.6 L1423.8,442.3 L1428.2,436.0 L1432.2,429.6 L1435.9,423.2 L1439.1,416.8 L1442.1,410.4 L1444.6,404.0 L1446.8,397.6 L1448.6,391.3 L1450.0,385.0Z" stroke="#ae2a32" stroke-width="2.2"/>
<path d="M1134.0,214.0 L1135.3,207.9 L1136.6,202.1 L1138.1,196.6 L1139.7,191.5 L1141.3,186.7 L1143.1,182.2 L1144.9,178.2 L1146.8,174.4 L1148.8,171.1 L1150.9,168.1 L1153.0,165.6 L1155.3,163.4 L1157.6,161.6 L1159.9,160.2 L1162.3,159.2 L1164.8,158.5 L1167.4,158.3 L1169.9,158.5 L1172.6,159.1 L1175.3,160.0 L1178.0,161.4 L1180.7,163.1 L1183.5,165.3 L1186.3,167.8 L1189.1,170.7 L1191.9,174.0 L1194.8,177.7 L1197.7,181.7 L1200.5,186.1 L1203.4,190.9 L1206.2,196.0 L1209.1,201.4 L1211.9,207.2 L1214.7,213.3 L1217.5,219.7 L1220.3,226.4 L1223.0,233.4 L1225.7,240.6 L1228.4,248.2 L1231.0,256.0 L1233.6,264.1 L1236.1,272.3 L1238.5,280.9 L1240.9,289.6 L1243.3,298.5 L1245.6,307.6 L1247.8,316.8 L1249.9,326.3 L1251.9,335.8 L1253.9,345.5 L1255.8,355.3 L1257.6,365.1 L1259.3,375.1 L1260.9,385.1 L1262.4,395.2 L1263.9,405.3 L1265.2,415.4 L1266.4,425.5 L1267.6,435.6 L1268.6,445.7 L1269.5,455.7 L1270.3,465.7 L1271.0,475.6 L1271.6,485.4 L1272.1,495.1 L1272.5,504.6 L1272.7,514.1 L1272.9,523.3 L1272.9,532.5 L1272.8,541.4 L1272.7,550.1 L1272.3,558.7 L1271.9,567.0 L1271.4,575.1 L1270.8,582.9 L1270.0,590.5 L1269.2,597.8 L1268.2,604.8 L1267.2,611.6 L1266.0,618.0 L1264.7,624.1 L1263.4,629.9 L1261.9,635.4 L1260.3,640.5 L1258.7,645.3 L1256.9,649.8 L1255.1,653.8 L1253.2,657.6 L1251.2,660.9 L1249.1,663.9 L1247.0,666.4 L1244.7,668.6 L1242.4,670.4 L1240.1,671.8 L1237.7,672.8 L1235.2,673.5 L1232.6,673.7 L1230.1,673.5 L1227.4,672.9 L1224.7,672.0 L1222.0,670.6 L1219.3,668.9 L1216.5,666.7 L1213.7,664.2 L1210.9,661.3 L1208.1,658.0 L1205.2,654.3 L1202.3,650.3 L1199.5,645.9 L1196.6,641.1 L1193.8,636.0 L1190.9,630.6 L1188.1,624.8 L1185.3,618.7 L1182.5,612.3 L1179.7,605.6 L1177.0,598.6 L1174.3,591.4 L1171.6,583.8 L1169.0,576.0 L1166.4,567.9 L1163.9,559.7 L1161.5,551.1 L1159.1,542.4 L1156.7,533.5 L1154.4,524.4 L1152.2,515.2 L1150.1,505.7 L1148.1,496.2 L1146.1,486.5 L1144.2,476.7 L1142.4,466.9 L1140.7,456.9 L1139.1,446.9 L1137.6,436.8 L1136.1,426.7 L1134.8,416.6 L1133.6,406.5 L1132.4,396.4 L1131.4,386.3 L1130.5,376.3 L1129.7,366.3 L1129.0,356.4 L1128.4,346.6 L1127.9,336.9 L1127.5,327.4 L1127.3,317.9 L1127.1,308.7 L1127.1,299.5 L1127.2,290.6 L1127.3,281.9 L1127.7,273.3 L1128.1,265.0 L1128.6,256.9 L1129.2,249.1 L1130.0,241.5 L1130.8,234.2 L1131.8,227.2 L1132.8,220.4 L1134.0,214.0Z" stroke="#2cc83a" stroke-width="2.2"/>
<path d="M1200,416 L1169,576" stroke="#2a92cf" stroke-width="2.2"/>
</g>
<g filter="url(#rough)"><g clip-path="url(#rc)">
<rect x="870" y="240" width="660" height="380" fill="#3d3754"/>
<g filter="url(#soft)">
<path d="M878,470 L900,462 L935,456 L958,470 L975,505 L990,530 L1005,560 L1030,585 L990,608 L940,608 L905,575 L885,520 Z" fill="#7a7ca2"/>
<path d="M1112,452 L1150,446 L1192,446 L1216,468 L1210,512 L1180,518 L1140,518 L1114,504 Z" fill="#9090a2"/>

<ellipse cx="1390" cy="338" rx="58" ry="52" fill="#878690"/>
<ellipse cx="1395" cy="345" rx="22" ry="18" fill="#74727e"/>
<path d="M1440,370 L1512,345 L1518,425 L1450,435 Z" fill="#84848e"/>
<path d="M1160,400 L1230,380 L1240,440 L1200,470 L1160,440 Z" fill="#6a6678"/>
<path d="M1250,380 L1330,360 L1350,440 L1280,470 Z" fill="#5a566c"/>
<path d="M1360,250 L1470,255 L1490,300 L1420,290 L1360,290 Z" fill="#353048"/>
<path d="M960,410 L1100,410 L1100,470 L960,470 Z" fill="#3a354c"/>
<path d="M940,560 L990,570 L1000,600 L950,605 Z" fill="#5e5c7c"/>
<path d="M895,520 L925,515 L930,545 L900,550 Z" fill="#6a6a8c"/>
</g>
<rect x="870" y="240" width="660" height="380" filter="url(#fine)"/>
<rect x="870" y="240" width="660" height="380" filter="url(#blot)"/>
<rect x="870" y="240" width="660" height="380" filter="url(#mott)"/>
<rect x="870" y="240" width="660" height="380" filter="url(#spk)" mask="url(#spkmask1)"/>
<rect x="870" y="240" width="660" height="380" filter="url(#dspk)"/>
<rect x="870" y="240" width="660" height="380" filter="url(#spk2)" mask="url(#spkmask)"/>
</g></g>
<g fill="none">
<path d="M911,613 L925,538 M925,538 L853,313 M911,613 L1550,531 M925,538 L1565,456 M1550,531 L1565,456" stroke="#d8e03c" stroke-width="1"/>
<path d="M1450.0,385.0 L1447.2,377.1 L1444.1,369.2 L1440.5,361.5 L1436.6,353.8 L1432.3,346.2 L1427.7,338.7 L1422.7,331.3 L1417.4,324.1 L1411.7,317.0 L1405.7,310.1 L1399.4,303.3 L1392.8,296.7 L1385.9,290.3 L1378.7,284.0 L1371.2,278.0 L1363.5,272.2 L1355.5,266.6 L1347.2,261.2 L1338.8,256.1 L1330.1,251.2 L1321.2,246.6 L1312.2,242.3 L1302.9,238.2 L1293.6,234.4 L1284.0,230.8 L1274.4,227.6 L1264.6,224.6 L1254.7,221.9 L1244.7,219.6 L1234.7,217.5 L1224.6,215.8 L1214.5,214.3 L1204.3,213.2 L1194.2,212.3 L1184.0,211.8 L1173.9,211.6 L1163.8,211.8 L1153.8,212.2 L1143.9,212.9 L1134.0,214.0 L1124.2,215.4 L1114.6,217.1 L1105.1,219.0 L1095.7,221.3 L1086.5,223.9 L1077.5,226.8 L1068.6,230.0 L1060.0,233.5 L1051.6,237.2 L1043.4,241.2 L1035.4,245.5 L1027.7,250.1 L1020.3,254.9 L1013.1,260.0 L1006.2,265.3 L999.7,270.8 L993.4,276.6 L987.5,282.5 L981.8,288.7 L976.6,295.1 L971.6,301.6 L967.0,308.4 L962.8,315.3 L959.0,322.3 L955.5,329.6 L952.4,336.9 L949.6,344.3 L947.3,351.9 L945.3,359.6 L943.8,367.3 L942.6,375.2 L941.8,383.1 L941.5,391.0 L941.5,399.0 L941.9,407.0 L942.8,415.0 L944.0,423.0 L945.6,431.1 L947.6,439.0 L950.0,447.0 L952.8,454.9 L955.9,462.8 L959.5,470.5 L963.4,478.2 L967.7,485.8 L972.3,493.3 L977.3,500.7 L982.6,507.9 L988.3,515.0 L994.3,521.9 L1000.6,528.7 L1007.2,535.3 L1014.1,541.7 L1021.3,548.0 L1028.8,554.0 L1036.5,559.8 L1044.5,565.4 L1052.8,570.8 L1061.2,575.9 L1069.9,580.8 L1078.8,585.4 L1087.8,589.7 L1097.1,593.8 L1106.4,597.6 L1116.0,601.2 L1125.6,604.4 L1135.4,607.4 L1145.3,610.1 L1155.3,612.4 L1165.3,614.5 L1175.4,616.2 L1185.5,617.7 L1195.7,618.8 L1205.8,619.7 L1216.0,620.2 L1226.1,620.4 L1236.2,620.2 L1246.2,619.8 L1256.1,619.1 L1266.0,618.0 L1275.8,616.6 L1285.4,614.9 L1294.9,613.0 L1304.3,610.7 L1313.5,608.1 L1322.5,605.2 L1331.4,602.0 L1340.0,598.5 L1348.4,594.8 L1356.6,590.8 L1364.6,586.5 L1372.3,581.9 L1379.7,577.1 L1386.9,572.0 L1393.8,566.7 L1400.3,561.2 L1406.6,555.4 L1412.5,549.5 L1418.2,543.3 L1423.4,536.9 L1428.4,530.4 L1433.0,523.6 L1437.2,516.7 L1441.0,509.7 L1444.5,502.4 L1447.6,495.1 L1450.4,487.7 L1452.7,480.1 L1454.7,472.4 L1456.2,464.7 L1457.4,456.8 L1458.2,448.9 L1458.5,441.0 L1458.5,433.0 L1458.1,425.0 L1457.2,417.0 L1456.0,409.0 L1454.4,400.9 L1452.4,393.0 L1450.0,385.0Z" stroke="#2a92cf" stroke-width="2.2" clip-path="url(#bclip)"/>
<path d="M1450.0,385.0 L1450.6,381.7 L1451.1,378.5 L1451.4,375.2 L1451.7,372.0 L1451.9,368.8 L1451.9,365.7 L1451.9,362.5 L1451.7,359.4 L1451.5,356.2 L1451.1,353.2 L1450.6,350.1 L1450.0,347.1 L1449.4,344.1 L1448.6,341.1 L1447.7,338.1 L1446.7,335.2 L1445.6,332.4 L1444.4,329.5 L1443.1,326.7 L1441.7,323.9 L1440.2,321.2 L1438.6,318.5 L1436.9,315.9 L1435.1,313.3 L1433.2,310.7 L1431.2,308.2 L1429.1,305.7 L1426.9,303.3 L1424.6,300.9 L1422.3,298.5 L1419.8,296.3 L1417.2,294.0 L1414.6,291.8 L1411.8,289.7 L1409.0,287.6 L1406.1,285.6 L1403.1,283.6 L1400.0,281.7 L1396.8,279.9 L1393.6,278.0 L1390.2,276.3 L1386.8,274.6 L1383.3,273.0 L1379.7,271.4 L1376.1,269.9 L1372.4,268.5 L1368.6,267.1 L1364.7,265.8 L1360.8,264.5 L1356.8,263.3 L1352.7,262.2 L1348.6,261.1 L1344.4,260.1 L1340.2,259.2 L1335.8,258.3 L1331.5,257.5 L1327.1,256.7 L1322.6,256.1 L1318.1,255.5 L1313.5,254.9 L1308.9,254.4 L1304.2,254.0 L1299.5,253.7 L1294.7,253.4 L1289.9,253.2 L1285.1,253.1 L1280.2,253.0 L1275.3,253.0 L1270.4,253.1 L1265.5,253.2 L1260.5,253.5 L1255.5,253.7 L1250.4,254.1 L1245.4,254.5 L1240.3,255.0 L1235.2,255.5 L1230.1,256.1 L1225.0,256.8 L1219.8,257.5 L1214.7,258.4 L1209.6,259.2 L1204.4,260.2 L1199.3,261.2 L1194.1,262.3 L1189.0,263.4 L1183.8,264.6 L1178.7,265.9 L1173.5,267.2 L1168.4,268.6 L1163.3,270.0 L1158.2,271.5 L1153.2,273.1 L1148.1,274.7 L1143.1,276.4 L1138.1,278.2 L1133.1,280.0 L1128.1,281.9 L1123.2,283.8 L1118.3,285.8 L1113.5,287.8 L1108.7,289.9 L1103.9,292.0 L1099.1,294.2 L1094.4,296.4 L1089.8,298.7 L1085.2,301.1 L1080.6,303.4 L1076.1,305.9 L1071.6,308.4 L1067.2,310.9 L1062.9,313.5 L1058.6,316.1 L1054.4,318.7 L1050.2,321.4 L1046.1,324.1 L1042.0,326.9 L1038.1,329.7 L1034.2,332.6 L1030.3,335.5 L1026.5,338.4 L1022.8,341.3 L1019.2,344.3 L1015.7,347.3 L1012.2,350.3 L1008.8,353.4 L1005.5,356.5 L1002.3,359.6 L999.1,362.7 L996.0,365.9 L993.1,369.1 L990.2,372.3 L987.4,375.5 L984.6,378.7 L982.0,382.0 L979.5,385.3 L977.0,388.5 L974.7,391.8 L972.4,395.1 L970.3,398.4 L968.2,401.7 L966.2,405.1 L964.4,408.4 L962.6,411.7 L960.9,415.1 L959.3,418.4 L957.9,421.7 L956.5,425.1 L955.2,428.4 L954.1,431.7 L953.0,435.0 L952.0,438.3 L951.2,441.6 L950.4,444.9 L949.8,448.2 L949.2,451.4 L948.8,454.7 L948.5,457.9 L948.2,461.1 L948.1,464.3 L948.1,467.5" stroke="#ae2a32" stroke-width="2.2"/>
<path d="M1134.0,214.0 L1134.6,210.9 L1135.3,207.9 L1135.9,204.9 L1136.6,202.1 L1137.4,199.3 L1138.1,196.6 L1138.9,194.0 L1139.7,191.5 L1140.5,189.0 L1141.3,186.7 L1142.2,184.4 L1143.1,182.2 L1144.0,180.1 L1144.9,178.2 L1145.8,176.3 L1146.8,174.4 L1147.8,172.7 L1148.8,171.1 L1149.8,169.6 L1150.9,168.1 L1152.0,166.8 L1153.0,165.6 L1154.1,164.4 L1155.3,163.4 L1156.4,162.4 L1157.6,161.6 L1158.7,160.8 L1159.9,160.2 L1161.1,159.6 L1162.3,159.2 L1163.6,158.8 L1164.8,158.5 L1166.1,158.4 L1167.4,158.3 L1168.6,158.3 L1169.9,158.5 L1171.3,158.7 L1172.6,159.1 L1173.9,159.5 L1175.3,160.0 L1176.6,160.7 L1178.0,161.4 L1179.3,162.2 L1180.7,163.1 L1182.1,164.2 L1183.5,165.3 L1184.9,166.5 L1186.3,167.8 L1187.7,169.2 L1189.1,170.7 L1190.5,172.3 L1191.9,174.0 L1193.4,175.8 L1194.8,177.7 L1196.2,179.7 L1197.7,181.7 L1199.1,183.9 L1200.5,186.1 L1202.0,188.5 L1203.4,190.9 L1204.8,193.4 L1206.2,196.0 L1207.7,198.6 L1209.1,201.4 L1210.5,204.3 L1211.9,207.2 L1213.3,210.2 L1214.7,213.3 L1216.1,216.4 L1217.5,219.7 L1218.9,223.0 L1220.3,226.4 L1221.7,229.8 L1223.0,233.4 L1224.4,237.0 L1225.7,240.6 L1227.1,244.4 L1228.4,248.2 L1229.7,252.1 L1231.0,256.0 L1232.3,260.0 L1233.6,264.1 L1234.8,268.2 L1236.1,272.3 L1237.3,276.6 L1238.5,280.9 L1239.8,285.2 L1240.9,289.6 L1242.1,294.0 L1243.3,298.5 L1244.4,303.0 L1245.6,307.6 L1246.7,312.2 L1247.8,316.8 L1248.8,321.5 L1249.9,326.3 L1250.9,331.0 L1251.9,335.8 L1252.9,340.6 L1253.9,345.5 L1254.9,350.4 L1255.8,355.3 L1256.7,360.2 L1257.6,365.1 L1258.5,370.1 L1259.3,375.1 L1260.1,380.1 L1260.9,385.1 L1261.7,390.2 L1262.4,395.2 L1263.2,400.2 L1263.9,405.3 L1264.6,410.3 L1265.2,415.4 L1265.8,420.5 L1266.4,425.5 L1267.0,430.6 L1267.6,435.6 L1268.1,440.7 L1268.6,445.7 L1269.1,450.7 L1269.5,455.7 L1269.9,460.7 L1270.3,465.7 L1270.7,470.6 L1271.0,475.6 L1271.3,480.5 L1271.6,485.4 L1271.9,490.2 L1272.1,495.1 L1272.3,499.9 L1272.5,504.6 L1272.6,509.4 L1272.7,514.1 L1272.8,518.7 L1272.9,523.3 L1272.9,527.9 L1272.9,532.5 L1272.9,537.0 L1272.8,541.4 L1272.8,545.8 L1272.7,550.1 L1272.5,554.4 L1272.3,558.7 L1272.2,562.9 L1271.9,567.0 L1271.7,571.1 L1271.4,575.1 L1271.1,579.0 L1270.8,582.9 L1270.4,586.7 L1270.0,590.5 L1269.6,594.2 L1269.2,597.8 L1268.7,601.3 L1268.2,604.8 L1267.7,608.2 L1267.2,611.6 L1266.6,614.8 L1266.0,618.0" stroke="#2cc83a" stroke-width="2.2"/>
<path d="M1266,618 L1134,214" stroke="#ae2a32" stroke-width="2.6"/>
<path d="M950,447 L1450,385" stroke="#2cc83a" stroke-width="2.8"/>
<path d="M1200,416 L1231,256" stroke="#2a92cf" stroke-width="2.6"/>
</g>
<defs><radialGradient id="sph" cx="0.7" cy="0.45" r="0.75" fx="0.72" fy="0.42"><stop offset="0" stop-color="#fbf43a"/><stop offset="0.4" stop-color="#e6d810"/><stop offset="0.78" stop-color="#3a3600"/><stop offset="1" stop-color="#050500"/></radialGradient>
<clipPath id="bclip"><path d="M490,90 H1778 V694 H490Z M1335,90 H1778 V366 H1335Z" clip-rule="evenodd"/></clipPath></defs>
<circle cx="1200" cy="415.6" r="9.8" fill="url(#sph)"/>
<text x="505" y="122.2" font-family="Liberation Sans" font-size="20" fill="#74be4c">Default point size</text>
<rect x="678" y="113.3" width="15" height="2.6" fill="#74be4c"/>
<rect x="709.5" y="113.3" width="15" height="2.6" fill="#74be4c"/><rect x="715.7" y="107.5" width="2.6" height="14" fill="#74be4c"/>
</svg>
</body></html>
